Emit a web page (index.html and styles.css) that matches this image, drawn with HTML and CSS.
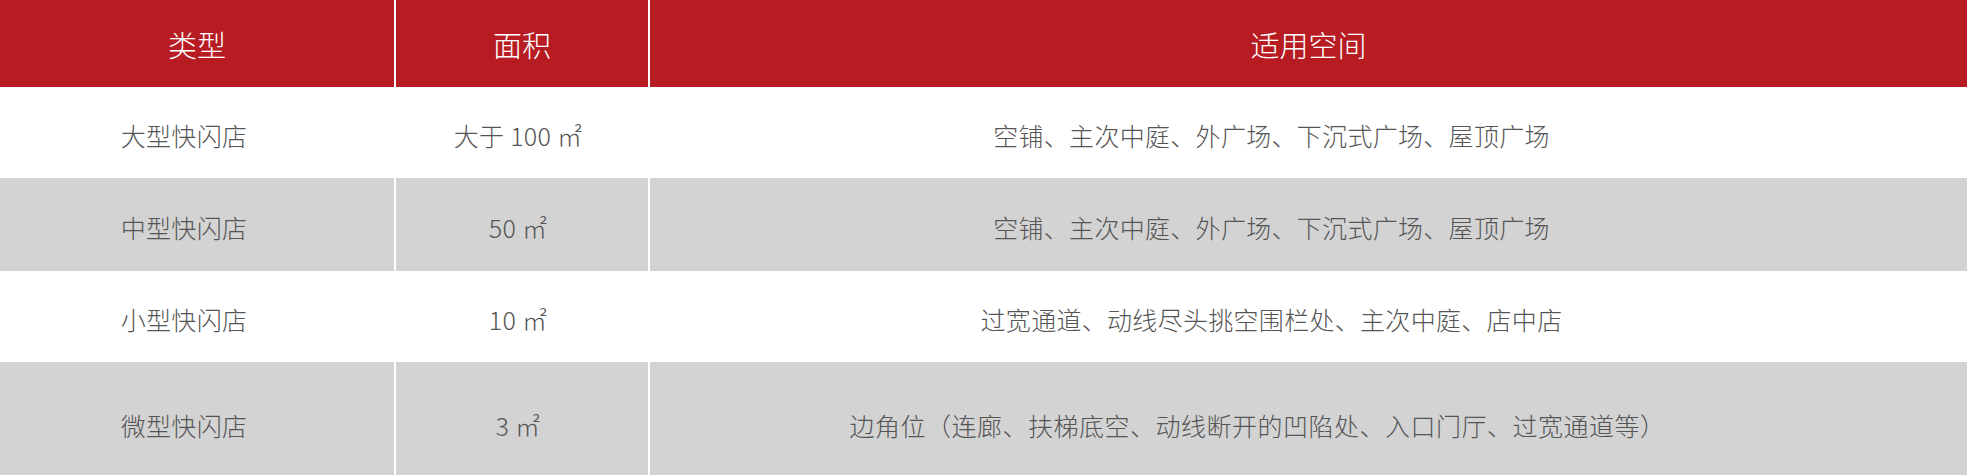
FILE: index.html
```html
<!DOCTYPE html>
<html lang="zh-CN">
<head>
<meta charset="utf-8">
<title>快闪店类型</title>
<link rel="stylesheet" href="styles.css">
</head>
<body>
<div class="table">
  <div class="cell head">类型</div>
  <div class="cell head">面积</div>
  <div class="cell head">适用空间</div>

  <div class="cell c1 r1">大型快闪店</div>
  <div class="cell c2 r1">大于 100 ㎡</div>
  <div class="cell c3 r1">空铺、主次中庭、外广场、下沉式广场、屋顶广场</div>

  <div class="cell c1 r2 alt">中型快闪店</div>
  <div class="cell c2 r2 alt">50 ㎡</div>
  <div class="cell c3 r2 alt">空铺、主次中庭、外广场、下沉式广场、屋顶广场</div>

  <div class="cell c1 r3">小型快闪店</div>
  <div class="cell c2 r3">10 ㎡</div>
  <div class="cell c3 r3">过宽通道、动线尽头挑空围栏处、主次中庭、店中店</div>

  <div class="cell c1 r4 alt">微型快闪店</div>
  <div class="cell c2 r4 alt">3 ㎡</div>
  <div class="cell c3 r4 alt wide">边角位（连廊、扶梯底空、动线断开的凹陷处、入口门厅、过宽通道等）</div>
</div>
</body>
</html>
```

FILE: styles.css
```css
html, body {
  margin: 0;
  padding: 0;
  overflow: hidden;
  background: #ffffff;
}

.table {
  display: grid;
  grid-template-columns: 394px 252px 1fr;
  grid-template-rows: 87px 91px 93px 91px 126px;
  column-gap: 2px;
  width: 1967px;
  background: #ffffff;
  font-family: "Noto Sans CJK SC", "Noto Sans", sans-serif;
  font-weight: 300;
}

.cell {
  display: flex;
  align-items: center;
  justify-content: center;
  white-space: nowrap;
  color: #555555;
  font-size: 25px;
  letter-spacing: 0.3px;
  background: #ffffff;
}

.head {
  background: #b71c22;
  color: #ffffff;
  font-size: 29px;
  letter-spacing: 0;
}

.alt {
  background: #d3d3d3;
}

.c1 {
  padding-right: 26px;
}

.c2 {
  padding-right: 8px;
}

.c3 {
  padding-right: 74px;
}

.c3.wide {
  padding-right: 102px;
  letter-spacing: 0.5px;
}

.r1, .r2, .r3 {
  padding-top: 5px;
}

.r4 {
  padding-top: 0;
}
```
